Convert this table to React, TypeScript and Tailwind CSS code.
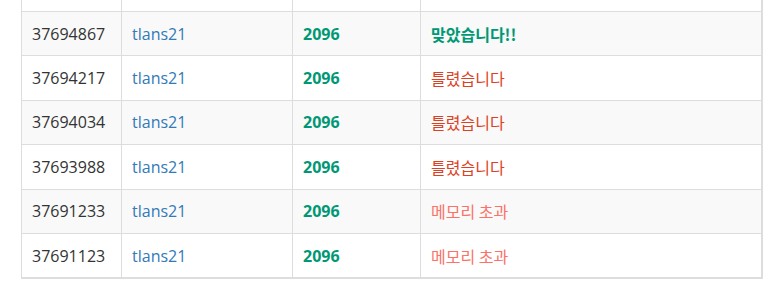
import React from "react";

type Row = { id: string; result: string; kind: "ac" | "wa" | "mle" };

const rows: Row[] = [
  { id: "37694867", result: "맞았습니다!!", kind: "ac" },
  { id: "37694217", result: "틀렸습니다", kind: "wa" },
  { id: "37694034", result: "틀렸습니다", kind: "wa" },
  { id: "37693988", result: "틀렸습니다", kind: "wa" },
  { id: "37691233", result: "메모리 초과", kind: "mle" },
  { id: "37691123", result: "메모리 초과", kind: "mle" },
];

const latin = "font-['Open_Sans','Noto_Sans_CJK_KR',sans-serif]";
const kr = "font-['Noto_Sans_CJK_KR','Noto_Sans',sans-serif]";

function ResultText({ r }: { r: Row }) {
  if (r.kind === "ac")
    return <span className={`${kr} text-[16px] font-bold text-[#009874]`}>맞았습니다!!</span>;
  if (r.kind === "wa")
    return <span className={`${kr} text-[16px] text-[#dd4124]`}>{r.result}</span>;
  return <span className={`${kr} text-[16px] text-[#fa7268]`}>{r.result}</span>;
}

export default function App() {
  return (
    <div className="w-[764px] h-[290px] bg-white overflow-hidden">
      <div className={`ml-[21px] w-[742px] border-l border-r-2 border-b-2 border-[#ddd] ${latin} text-[16px]`}>
        <div className="flex h-[11px] bg-white">
          <div className="w-[99px]" />
          <div className="w-[171px] border-l border-[#ddd]" />
          <div className="w-[128px] border-l border-[#ddd]" />
          <div className="flex-1 border-l border-[#ddd]" />
        </div>
        {rows.map((r, i) => (
          <div
            key={r.id}
            className={`flex h-[44.4px] border-t border-[#ddd] ${i % 2 === 0 ? "bg-[#f9f9f9]" : "bg-white"}`}
          >
            <div className="w-[99px] flex items-center pl-[10px] text-[#333]">{r.id}</div>
            <div className="w-[171px] flex items-center pl-[10px] border-l border-[#ddd] text-[#337ab7]">
              tlans21
            </div>
            <div className="w-[128px] flex items-center pl-[10px] border-l border-[#ddd] font-bold text-[#009874]">
              2096
            </div>
            <div className="flex-1 flex items-center pl-[10px] border-l border-[#ddd]">
              <ResultText r={r} />
            </div>
          </div>
        ))}
      </div>
    </div>
  );
}
